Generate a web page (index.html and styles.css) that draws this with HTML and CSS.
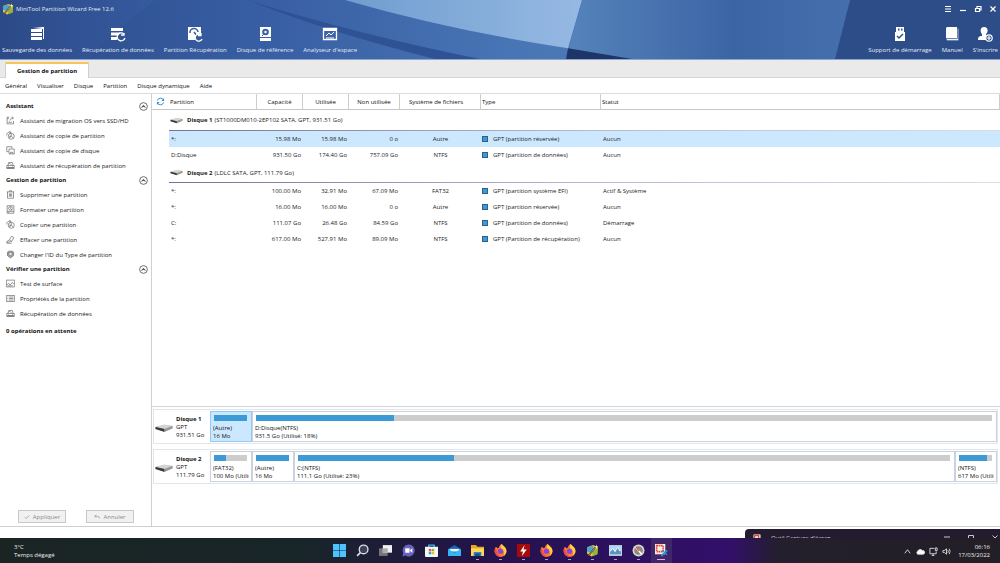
FILE: index.html
```html
<!DOCTYPE html>
<html lang="fr">
<head>
<meta charset="utf-8">
<title>MiniTool Partition Wizard Free 12.6</title>
<meta name="viewport" content="width=device-width, initial-scale=1">
<link rel="stylesheet" href="styles.css">
</head>
<body>
<svg class="sprite" aria-hidden="true">
  <symbol id="wizard" viewBox="0 0 24 24">
    <path d="M2 6 13 2l9 4-1 13-11 4-8-5z" fill="#e8c92c"/><path d="M2 6l11-3 1 6-6 6-6-1z" fill="#4fa3cf"/><path d="M12 14l9-6v11l-9 3z" fill="#8fb53a"/><path d="M5 21 18 5" stroke="#2a3b52" stroke-width="3"/><path d="M5 21 18 5" stroke="#f7e9a0" stroke-width="1"/><path d="m19 1 1 3 3 1-3 1-1 3-1-3-3-1 3-1z" fill="#fff3a0"/>
  </symbol>
  <symbol id="diskicon" viewBox="0 0 36 20">
    <path d="M1 8 18 4l17 2v4l-16 7L1 12z" fill="#999"/><path d="M1 8 18 3l17 3-16 6z" fill="#d4d4d4"/><path d="m1 8 18 4v6L1 12z" fill="#3a3a3a"/><path d="m19 12 16-6v5l-16 7z" fill="#9b9b9b"/>
  </symbol>
  <symbol id="up" viewBox="0 0 20 20"><circle cx="10" cy="10" r="8.6" fill="none" stroke="#444" stroke-width="1.7"/><path d="m5.500 12 4.500-5 4.500 5-4.500-2z" fill="#333" stroke="#333"/></symbol>
  <symbol id="migrate" viewBox="0 0 24 24"><path d="M9 3H3v18h17v-8M3 7h5M6 16v2m3-4v4m3-2v2m3-3v3M11 12c1-5 4-7 8-7m-4-3 5 3-4 4"/></symbol>
  <symbol id="copypart" viewBox="0 0 24 24"><circle cx="14" cy="14" r="8"/><path d="M14 14V6m0 8 6 5m-6-5-7 3M2 12c-1-6 4-10 10-9m-3-2 4 2-3 4M11 12v6"/></symbol>
  <symbol id="copydisk" viewBox="0 0 24 24"><path d="M2 2h14v4M2 2v13h5M8 8h14v13H8zM12 21v-4h6v4"/></symbol>
  <symbol id="drive" viewBox="0 0 24 24"><path d="M5 12 7 4h10l2 8M2 12h20v8H2zM7 9l3-3 4 4M5 16h3m8 0h3"/><path d="M3 18h18" stroke-width="3"/></symbol>
  <symbol id="trash" viewBox="0 0 24 24"><path d="M2 5h20M9 5V2h6v3M4 5v17h16V5M9 9v9m3-9v9m3-9v9"/></symbol>
  <symbol id="format" viewBox="0 0 24 24"><path d="M3 2h18v20H3zM3 17h18M6 20h3"/><circle cx="12" cy="9" r="5"/><path d="m12 9 4 5M12 6v3"/></symbol>
  <symbol id="erase" viewBox="0 0 24 24"><path d="M9 13 15 3l6 4-6 10-7 2-6-1zM9 13l6 4M2 22h13M3 18l-1 4"/></symbol>
  <symbol id="type" viewBox="0 0 24 24"><path d="M4 6c0-4 16-4 16 0v9l-8 6-8-6z" fill="#aaa"/><path d="M8 6h8v6l-4 4-4-4z" fill="#eee"/></symbol>
  <symbol id="surface" viewBox="0 0 24 24"><path d="M1 3h22v18H1zM2 16l5-5 4 5 6-7 3 4h2M4 18h14"/></symbol>
  <symbol id="props" viewBox="0 0 24 24"><path d="M1 4h22v16H1zM4 8h2m2 0h12M4 12h2m2 0h12M4 16h2m2 0h12"/></symbol>
  <symbol id="firefox" viewBox="0 0 24 24"><path d="M14 0c2 3 9 6 9 13a11 11 0 0 1-22 0c0-4 1-6 3-8l2 3 3-1c1-4 3-6 5-7z" fill="#ff7b29"/><path d="M14 0c2 3 9 6 9 13 0 4-2 7-5 9 2-5 1-9-3-12-3-3-3-6-1-10z" fill="#ffcf3d"/><path d="M1 13a11 11 0 0 0 16 9c-5 1-10-1-11-6L3 8z" fill="#f43f5c"/><circle cx="12" cy="13.500" r="5" fill="#8b45d9"/></symbol>
</svg>

<div class="app">
  <header class="banner">
    <svg class="banner-art" viewBox="0 0 1000 60" preserveAspectRatio="none" aria-hidden="true">
      <defs>
        <linearGradient id="g1"><stop offset="0" stop-color="#2c4b88"/><stop offset=".25" stop-color="#375da2"/><stop offset=".55" stop-color="#4a78b7"/></linearGradient>
        <linearGradient id="g2"><stop offset="0" stop-color="#6f9dce"/><stop offset="1" stop-color="#96b9e3"/></linearGradient>
        <linearGradient id="g3"><stop offset="0" stop-color="#5583ba"/><stop offset=".6" stop-color="#3b64a4"/><stop offset="1" stop-color="#4570ad"/></linearGradient>
        <linearGradient id="g4" x1="0" y1="0" x2="1" y2="0"><stop offset="0" stop-color="#2c4a87"/><stop offset="1" stop-color="#365aa0"/></linearGradient>
      </defs>
      <rect width="1000" height="60" fill="url(#g1)"/>
      <path d="M155 0Q122 25 88 60H0V0z" fill="url(#g4)"/>
      <path d="M248 0Q350 33 480 60H435Q320 30 248 0z" fill="#2f5295"/>
      <path d="M345 0Q450 31 568 49L582 0z" fill="url(#g2)"/>
      <path d="M582 0H850L835 60H566z" fill="url(#g3)"/>
      <path d="M568 49 632 60H566z" fill="#1d3567"/>
      <path d="M850 0H1000V60H835z" fill="#2d4d89"/>
    </svg>
    <div class="titlebar">
      <svg class="app-icon"><use href="#wizard"/></svg>
      <h1>MiniTool Partition Wizard Free 12.6</h1>
      <div class="window-buttons">
        <button aria-label="Menu"><svg viewBox="0 0 8 8"><path d="M1 1.500h6M1 4h6M1 6.500h6"/></svg></button>
        <button aria-label="Réduire"><svg viewBox="0 0 8 8"><path d="M1 5.500h6"/></svg></button>
        <button aria-label="Restaurer"><svg viewBox="0 0 8 8"><path d="M1.500 3.500h4v3h-4zM3 3V1.500h4V5H5.500"/></svg></button>
        <button aria-label="Fermer"><svg viewBox="0 0 8 8"><path d="m1.500 1.500 5 5m0-5-5 5"/></svg></button>
      </div>
    </div>
    <nav class="toolbar" aria-label="Outils">
      <button><svg viewBox="0 0 16 16"><path d="m4 2 10-1v2M2 3h11v3H2zM2 7h11v3H2zM2 11h11v3H2z" fill="#fff"/><path d="M14.500 1v12" stroke="#fff"/></svg>Sauvegarde des données</button>
      <button><svg viewBox="0 0 16 16"><path d="M1 2h12v3H1zM1 6.500h10L8 9.500H1zM1 11h6v3H1z" fill="#fff"/><path d="M14 8a4 4 0 1 0 1 4m-1-5v2h-3" fill="none" stroke="#fff" stroke-width="1.300"/></svg>Récupération de données</button>
      <button><svg viewBox="0 0 16 16"><path d="M1 1h13v7a5 5 0 0 0-6 6H1z" fill="#fff"/><path d="M3 7a4 4 0 0 1 8-1M7 6l3 4" fill="none" stroke="#3a60a4" stroke-width="1.600"/><path d="M14 9a3.500 3.500 0 1 0 1 4m-1-6v2.500h-3" fill="none" stroke="#fff" stroke-width="1.300"/></svg>Partition Récupération</button>
      <button><svg viewBox="0 0 16 16"><path d="M3 1h11v10H3zM3 12h11v3H3z" fill="#fff"/><circle cx="8.500" cy="6" r="3.300" fill="#3a60a4"/><circle cx="8.500" cy="6" r="1.200" fill="#fff"/><path d="m5 10 2-2" stroke="#3a60a4"/></svg>Disque de référence</button>
      <button><svg viewBox="0 0 16 16"><path d="M1 2h14v3H1z" fill="#fff"/><path d="M1.500 2.500h13v11h-13z" fill="none" stroke="#fff" stroke-width="1.300"/><path d="m4 10 3-3 2 2 3-3M4 12h8" fill="none" stroke="#fff"/></svg>Analyseur d'espace</button>
      <button class="push"><svg viewBox="0 0 16 16"><path d="M4 1h8v5h1v9H3V6h1z" fill="#fff"/><path d="M6 2.500h1.500v2H6zM9 2.500h1.500v2H9z" fill="#2d4d89"/><path d="m5 10 2 2 4-4" fill="none" stroke="#2d4d89" stroke-width="1.400"/></svg>Support de démarrage</button>
      <button><svg viewBox="0 0 16 16"><path d="M3 1h10v11H2V2z" fill="#fff"/><path d="M13.500 2.500h1v12H3l-1-2h11.500z" fill="#a9bbdb"/><path d="M3 13.500h11" stroke="#fff" stroke-width=".8"/></svg>Manuel</button>
      <button><svg viewBox="0 0 16 16"><path d="M7 1c5 0 4 6 2 7v2l3 4H1c0-3 1-4 4-4V8C3 6 3 1 7 1z" fill="#fff"/><circle cx="12" cy="12" r="3.200" fill="#2d4d89" stroke="#fff" stroke-width="1.200"/><path d="M10 12h4M12 10v4" stroke="#fff" stroke-width="1.200"/></svg>S'inscrire</button>
    </nav>
  </header>

  <div class="tabs" role="tablist"><button role="tab" aria-selected="true" class="tab">Gestion de partition</button></div>
  <nav class="menubar" aria-label="Menu principal">
    <button>Général</button><button>Visualiser</button><button>Disque</button><button>Partition</button><button>Disque dynamique</button><button>Aide</button>
  </nav>

  <main class="workspace">
    <aside class="sidebar">
      <section>
        <h2>Assistant<button class="fold" aria-label="Replier Assistant"><svg><use href="#up"/></svg></button></h2>
        <button class="action"><svg><use href="#migrate"/></svg>Assistant de migration OS vers SSD/HD</button>
        <button class="action"><svg><use href="#copypart"/></svg>Assistant de copie de partition</button>
        <button class="action"><svg><use href="#copydisk"/></svg>Assistant de copie de disque</button>
        <button class="action"><svg><use href="#drive"/></svg>Assistant de récupération de partition</button>
      </section>
      <section>
        <h2>Gestion de partition<button class="fold" aria-label="Replier Gestion de partition"><svg><use href="#up"/></svg></button></h2>
        <button class="action"><svg><use href="#trash"/></svg>Supprimer une partition</button>
        <button class="action"><svg><use href="#format"/></svg>Formater une partition</button>
        <button class="action"><svg><use href="#copypart"/></svg>Copier une partition</button>
        <button class="action"><svg><use href="#erase"/></svg>Effacer une partition</button>
        <button class="action"><svg><use href="#type"/></svg>Changer l'ID du Type de partition</button>
      </section>
      <section>
        <h2>Vérifier une partition<button class="fold" aria-label="Replier Vérifier une partition"><svg><use href="#up"/></svg></button></h2>
        <button class="action"><svg><use href="#surface"/></svg>Test de surface</button>
        <button class="action"><svg><use href="#props"/></svg>Propriétés de la partition</button>
        <button class="action"><svg><use href="#drive"/></svg>Récupération de données</button>
      </section>
      <p class="pending">0 opérations en attente</p>
      <div class="commit">
        <button disabled><svg viewBox="0 0 8 8"><path d="m1 4 2 2 4-4"/></svg>Appliquer</button>
        <button disabled><svg viewBox="0 0 8 8"><path d="M3 1 1 3l2 2M1 3h4q2 0 2 3"/></svg>Annuler</button>
      </div>
    </aside>

    <div class="content">
      <table class="partitions">
        <colgroup><col class="c-gutter"><col class="c-name"><col class="c-size"><col class="c-size"><col class="c-free"><col class="c-fs"><col class="c-type"><col></colgroup>
        <thead>
          <tr><th class="gutter"><button class="refresh" aria-label="Actualiser"><svg viewBox="0 0 20 20"><path d="M3 8a7.500 7.500 0 0 1 14-1M17 12a7.500 7.500 0 0 1-14 1" fill="none" stroke="#2f8fd8" stroke-width="2.200"/><path d="M18 2v7h-6zM2 18v-7h6z" fill="#2f8fd8"/></svg></button></th><th class="left">Partition</th><th>Capacité</th><th>Utilisée</th><th>Non utilisée</th><th class="fs-head">Système de fichiers</th><th class="left">Type</th><th class="left">Statut</th></tr>
        </thead>
        <tbody>
          <tr class="group first"><td></td><td colspan="7"><div><svg><use href="#diskicon"/></svg><b>Disque 1</b> (ST1000DM010-2EP102 SATA, GPT, 931.51 Go)</div></td></tr>
          <tr class="selected"><td></td><td>*:</td><td>15.98 Mo</td><td>15.98 Mo</td><td>0 o</td><td>Autre</td><td><i></i>GPT (partition réservée)</td><td>Aucun</td></tr>
          <tr><td></td><td>D:Disque</td><td>931.50 Go</td><td>174.40 Go</td><td>757.09 Go</td><td>NTFS</td><td><i></i>GPT (partition de données)</td><td>Aucun</td></tr>
        </tbody>
        <tbody>
          <tr class="group"><td></td><td colspan="7"><div><svg><use href="#diskicon"/></svg><b>Disque 2</b> (LDLC SATA, GPT, 111.79 Go)</div></td></tr>
          <tr><td></td><td>*:</td><td>100.00 Mo</td><td>32.91 Mo</td><td>67.09 Mo</td><td>FAT32</td><td><i></i>GPT (partition système EFI)</td><td>Actif &amp; Système</td></tr>
          <tr><td></td><td>*:</td><td>16.00 Mo</td><td>16.00 Mo</td><td>0 o</td><td>Autre</td><td><i></i>GPT (partition réservée)</td><td>Aucun</td></tr>
          <tr><td></td><td>C:</td><td>111.07 Go</td><td>26.48 Go</td><td>84.59 Go</td><td>NTFS</td><td><i></i>GPT (partition de données)</td><td>Démarrage</td></tr>
          <tr><td></td><td>*:</td><td>617.00 Mo</td><td>527.91 Mo</td><td>89.09 Mo</td><td>NTFS</td><td><i></i>GPT (Partition de récupération)</td><td>Aucun</td></tr>
        </tbody>
      </table>

      <div class="map">
        <section class="disk">
          <svg><use href="#diskicon"/></svg>
          <div class="disk-info"><b>Disque 1</b><br>GPT<br>931.51 Go</div>
          <div class="part small chosen"><div class="bar"><span style="width:100%"></span></div><p>(Autre)</p><p>16 Mo</p></div>
          <div class="part"><div class="bar"><span style="width:18.75%"></span></div><p>D:Disque(NTFS)</p><p>931.5 Go (Utilisé: 18%)</p></div>
        </section>
        <section class="disk">
          <svg><use href="#diskicon"/></svg>
          <div class="disk-info"><b>Disque 2</b><br>GPT<br>111.79 Go</div>
          <div class="part small"><div class="bar"><span style="width:35%"></span></div><p>(FAT32)</p><p>100 Mo (Utilisé</p></div>
          <div class="part small"><div class="bar"><span style="width:100%"></span></div><p>(Autre)</p><p>16 Mo</p></div>
          <div class="part"><div class="bar"><span style="width:23.9%"></span></div><p>C:(NTFS)</p><p>111.1 Go (Utilisé: 23%)</p></div>
          <div class="part small"><div class="bar"><span style="width:86%"></span></div><p>(NTFS)</p><p>617 Mo (Utilisé</p></div>
        </section>
      </div>
    </div>
  </main>
  <div class="statusbar">
    <div class="snip"><svg viewBox="0 0 10 10"><path d="M1 1h8v8H1z" fill="#f5e9e6"/><path d="M2 2h5v5H2z" fill="none" stroke="#d9502e" stroke-width="1.500"/></svg><span>Outil Capture d'écran</span>
      <svg class="snip-min" viewBox="0 0 8 8"><path d="M1 3h6"/></svg><svg viewBox="0 0 8 8"><path d="M1.500 1.500h5v5h-5z"/></svg><svg viewBox="0 0 8 8"><path d="m1.500 1.500 5 5m0-5-5 5"/></svg></div>
  </div>
</div>

<footer class="taskbar">
  <div class="weather">3°C<br>Temps dégagé</div>
  <div class="apps">
    <button aria-label="Démarrer"><svg viewBox="0 0 24 24"><path d="M0 0h11.500v11.500H0zM12.500 0H24v11.500H12.500zM0 12.500h11.500V24H0zM12.500 12.500H24V24H12.500z" fill="#4cc2ff"/></svg></button>
    <button aria-label="Rechercher"><svg viewBox="0 0 24 24"><circle cx="14" cy="10" r="8" fill="#3b4358" stroke="#d9dde5" stroke-width="2.500"/><path d="m8 16-6 6" stroke="#d9dde5" stroke-width="3"/></svg></button>
    <button aria-label="Vue des tâches"><svg viewBox="0 0 24 24"><path d="M0 8h16v14H0z" fill="#777"/><path d="M7 2h17v14H7z" fill="#f1f1f1"/><path d="M7 8h9v8H7z" fill="#aaa"/></svg></button>
    <button aria-label="Conversation"><svg viewBox="0 0 24 24"><path d="M12 1a11 11 0 1 1-6 20l-5 2 1-7A11 11 0 0 1 12 1z" fill="#6a62bd"/><path d="M6 8h8v8H6zM15 11l4-3v8l-4-3z" fill="#fff"/></svg></button>
    <button aria-label="Microsoft Store"><svg viewBox="0 0 24 24"><path d="M7 7V2h10v5" fill="none" stroke="#3ab5ef" stroke-width="2.500"/><path d="M0 5h24v17q0 2-2 2H2q-2 0-2-2z" fill="#f4f6f8"/><path d="M7 9h4.500v4.500H7z" fill="#ef5036"/><path d="M12.500 9H17v4.500h-4.500z" fill="#7cb82f"/><path d="M7 14.500h4.500V19H7z" fill="#20a5e8"/><path d="M12.500 14.500H17V19h-4.500z" fill="#fbb813"/></svg></button>
    <button aria-label="Courrier"><svg viewBox="0 0 24 24"><path d="M0 9 12 2l12 7v13H0z" fill="#1267b4"/><path d="M3 9h18v5H3z" fill="#e8f5fc"/><path d="m0 9 12 7 12-7v13H0z" fill="#35b4f1"/></svg></button>
    <button class="running" aria-label="Explorateur"><svg viewBox="0 0 24 24"><path d="M0 2h9l3 3h12v17H0z" fill="#e6a823"/><path d="M0 8h24v14H0z" fill="#ffd75c"/><path d="M5 15h14v7H5z" fill="#247bc4"/><path d="M8 18h8v4H8z" fill="#164f86"/></svg></button>
    <button class="running" aria-label="Firefox"><svg><use href="#firefox"/></svg></button>
    <button class="running" aria-label="Flash"><svg viewBox="0 0 24 24"><path d="M0 0h24v24H0z" fill="#a60b0b"/><path d="M14 2 6 14h5l-2 8 9-12h-6z" fill="#fff"/></svg></button>
    <button class="running" aria-label="Firefox 2"><svg><use href="#firefox"/></svg></button>
    <button class="running" aria-label="Firefox 3"><svg><use href="#firefox"/></svg></button>
    <button class="running" aria-label="Partition Wizard"><svg><use href="#wizard"/></svg></button>
    <button class="running" aria-label="Moniteur"><svg viewBox="0 0 24 24"><path d="M0 2h24v20H0z" fill="#c7d3dc"/><path d="M2 4h20v15H2z" fill="#a5d8f5"/><path d="m2 15 5-6 4 6 5-9 4 8 2-1v6H2z" fill="#5795c0"/><path d="m2 13 5-5 4 6 5-8 4 7" fill="none" stroke="#fff" stroke-width="1.500"/></svg></button>
    <button class="running" aria-label="Horloge"><svg viewBox="0 0 24 24"><circle cx="12" cy="12" r="11" fill="#d9d6cf"/><circle cx="12" cy="12" r="8" fill="#8c8880"/><path d="m6 5 12 14" stroke="#fff" stroke-width="3"/><path d="m7 5 6 8" stroke="#d3352b" stroke-width="2"/></svg></button>
    <button class="running active" aria-label="Outil Capture"><svg viewBox="0 0 24 24"><path d="M0 0h19v19H0z" fill="#f6eeee"/><path d="M3 3h12v11H3z" fill="none" stroke="#e2492f" stroke-width="3" stroke-dasharray="3 1"/><path d="m14 12 8 8m0-7-10 8" stroke="#2d8fd8" stroke-width="2.500"/><circle cx="21" cy="13" r="2" fill="#2d8fd8"/><circle cx="13" cy="21" r="2" fill="#2d8fd8"/></svg></button>
  </div>
  <div class="tray">
    <svg viewBox="0 0 10 10"><path d="m2 7 3-4 3 4"/></svg>
    <svg viewBox="0 0 10 10"><path d="M2 8a2 2 0 0 1 0-3.500A3 3 0 0 1 7 4a2 2 0 0 1 1 4z" fill="#fff"/></svg>
    <svg viewBox="0 0 10 10"><path d="M6 1.500H1v6h7V5M3 9.500h3M4.500 7.500v2M7 1h2v3H7z"/></svg>
    <svg viewBox="0 0 10 10"><path d="M1 4h1.500L5 2v6L2.500 6H1zM6.500 3.500q1 1.500 0 3M8 2q2 3 0 6"/></svg>
    <time datetime="2022-03-17T06:16">06:16<br>17/03/2022</time>
  </div>
</footer>
</body>
</html>
```
FILE: styles.css
```css
* { box-sizing: border-box; }
body {
  margin: 0;
  min-height: 100vh;
  display: flex;
  flex-direction: column;
  font: 6px/8px "Open Sans", "Noto Sans", sans-serif;
  color: #111;
  background: #fff;
}
button {
  margin: 0;
  padding: 0;
  border: 0;
  background: none;
  color: inherit;
  font: inherit;
  white-space: nowrap;
}
h1, h2, p { margin: 0; font: inherit; }
svg { display: block; flex: none; fill: none; }
.sprite { position: absolute; width: 0; height: 0; }
.app { flex: 1; display: flex; flex-direction: column; }

/* Banner */
.banner {
  position: relative;
  color: #e3ebf7;
  border-bottom: 1px solid #8ea5cc;
}
.banner-art { position: absolute; inset: 0; width: 100%; height: 100%; }
.titlebar, .toolbar { position: relative; display: flex; }
.titlebar { align-items: center; gap: 2px; height: 18px; padding: 0 3px 0 2px; }
.app-icon { width: 12px; height: 12px; }
.window-buttons { margin-left: auto; display: flex; gap: 7px; }
.window-buttons svg { width: 8px; height: 8px; stroke: #fff; stroke-width: 1.2; }
.toolbar { gap: 10px; padding: 8px 2px 5px; }
.toolbar button { display: flex; flex-direction: column; align-items: center; gap: 4px; }
.toolbar svg { width: 16px; height: 16px; }
.toolbar .push { margin-left: auto; }

/* Tabs and menu */
.tabs {
  display: flex;
  padding: 2px 5px 0;
  height: 18px;
  background: #eaeaea;
  border-bottom: 1px solid #d6d6d6;
}
.tab {
  height: 16px;
  padding: 0 11px;
  background: #fff;
  border: 1px solid #d0d0d0;
  border-top: 2px solid #f6c65b;
  border-bottom: 0;
  font-weight: 700;
}
.menubar { display: flex; gap: 10px; height: 16px; padding: 0 5px; border-bottom: 1px solid #dcdcdc; }

/* Sidebar */
.workspace { flex: 1; display: flex; border-bottom: 1px solid #cfcfcf; }
.sidebar {
  flex: none;
  width: 152px;
  display: flex;
  flex-direction: column;
  padding: 5px 3px 3px 6px;
  border-right: 1px solid #d0d0d0;
}
.sidebar h2 {
  display: flex;
  justify-content: space-between;
  align-items: center;
  height: 14px;
  font-weight: 700;
}
.fold svg { width: 9px; height: 9px; }
.action { display: flex; align-items: center; gap: 5px; height: 15px; color: #222; }
.action svg { width: 9px; height: 9px; stroke: #666; stroke-width: 1.8; }
.pending { padding-top: 6px; font-weight: 700; }
.commit { display: flex; gap: 20px; margin-top: auto; padding-left: 12px; }
.commit button {
  display: flex;
  align-items: center;
  justify-content: center;
  gap: 3px;
  width: 48px;
  height: 13px;
  border: 1px solid #c8c8c8;
  background: #f1f1f1;
  color: #8a8a8a;
}
.commit svg { width: 6px; height: 6px; stroke: #999; }

/* Partition table */
.content { flex: 1; min-width: 0; display: flex; flex-direction: column; justify-content: space-between; }
.partitions { width: 100%; table-layout: fixed; border-collapse: separate; border-spacing: 0; }
.c-gutter { width: 17px; }
.c-name { width: 88px; }
.c-size { width: 46px; }
.c-free { width: 51px; }
.c-fs { width: 81px; }
.c-type { width: 120px; }
th, td { padding: 0 2px; white-space: nowrap; }
th {
  height: 16px;
  font-weight: 400;
  border-right: 1px solid #cdcdcd;
  border-bottom: 1px solid #c6c6c6;
}
th.left { text-align: left; padding-left: 1px; }
th.fs-head { padding-right: 10px; }
th.gutter { border-right: 0; padding: 0 4px; }
.refresh { display: block; }
.refresh svg { width: 9px; height: 9px; }
td { height: 16px; color: #222; }
td:nth-child(n+3):nth-child(-n+5) { text-align: right; }
td:nth-child(6) { text-align: center; }
td:nth-child(7) { padding-left: 1px; }
.selected td:not(:first-child) { background: #cce8ff; }
td i {
  display: inline-block;
  width: 6px;
  height: 6px;
  margin-right: 5px;
  vertical-align: -1px;
  background: #3c9ad6;
  border: 1px solid #2c6288;
}
.group td { height: 20px; padding: 0; }
.group.first td { height: 21px; }
.group td + td {
  border-bottom: 1px solid;
  border-image: linear-gradient(90deg, #77709c, #b9b6d0 50%, #dcdce8) 1;
}
.group div { display: flex; align-items: center; gap: 2px; padding-left: 1px; }
.group svg { width: 13px; height: 7px; margin-right: 2px; }

/* Disk map */
.map {
  display: flex;
  flex-direction: column;
  gap: 5px;
  padding: 2px 2px 42px 1px;
  border-top: 1px solid #d6d6d6;
}
.disk { display: flex; border: 1px solid #e2e6eb; padding: 1px 0; }
.disk > svg { width: 18px; height: 10px; margin: 12px 3px 0 1px; }
.disk-info { flex: none; width: 34px; padding-top: 4px; }
.part {
  flex: 1;
  min-width: 0;
  padding: 3px 2px 1px;
  border: 1px solid #c9d3de;
}
.part p { overflow: hidden; white-space: nowrap; }
.part.small { flex: none; width: 42px; }
.part.chosen { background: #cce8ff; border-color: #90caf9; }
.bar { height: 6px; margin: 0 2px 3px 1px; background: #cdcdcd; }
.bar span { display: block; height: 100%; background: #3c9ad6; }

/* Snipping tool window and taskbar */
.statusbar { position: relative; height: 11px; }
.snip {
  position: absolute;
  right: 0;
  bottom: 0;
  width: 255px;
  height: 9px;
  overflow: hidden;
  display: flex;
  gap: 16px;
  padding: 5px 1px 0 8px;
  border-radius: 4px 0 0;
  background: #231b30;
  color: #ddd;
}
.snip span { margin-left: -6px; }
.snip svg { width: 8px; height: 8px; stroke: #ccc; }
.snip .snip-min { margin-left: auto; }
.taskbar {
  display: grid;
  grid-template-columns: 1fr auto 1fr;
  height: 25px;
  color: #eee;
  background: linear-gradient(90deg, #1a2423 0, #182528 30%, #23134a 48%, #2c1160 62%, #32106a 73%, #231f2c 78%, #221f26);
}
.weather { padding: 5px 14px; }
.apps { display: flex; }
.apps button {
  width: 23px;
  height: 25px;
  display: grid;
  justify-items: center;
  align-content: start;
  gap: 2px;
  padding-top: 6px;
}
.apps svg { width: 13px; height: 13px; }
.running::after { content: ""; width: 3px; height: 1px; background: #a79fb8; }
.active { background: linear-gradient(90deg, transparent 1px, #3e2668 1px 22px, transparent 22px); }
.active::after { width: 8px; background: #e6a6e8; }
.tray { display: flex; justify-content: flex-end; align-items: center; gap: 4px; padding-right: 10px; }
.tray svg { width: 9px; height: 9px; stroke: #ddd; stroke-width: 1; }
.tray time { margin-left: 3px; text-align: right; }
```
